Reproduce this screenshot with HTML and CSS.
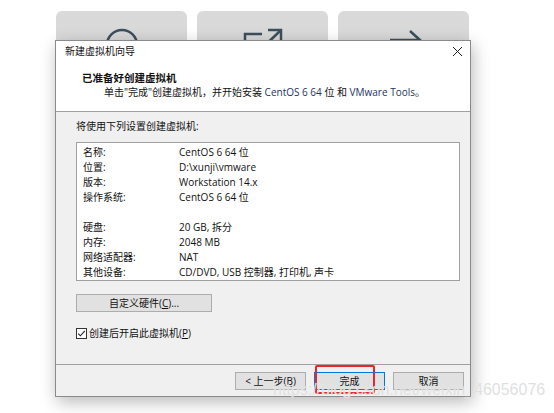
FILE: index.html
```html
<!DOCTYPE html>
<html lang="zh-CN">
<head>
    <meta charset="UTF-8">
    <title>新建虚拟机向导</title>
    <link rel="stylesheet" href="styles.css">
</head>
<body>

    <div class="tiles">
        <div class="tile">
            <svg class="tile-icon" width="40" height="40" viewBox="0 0 40 40"><circle cx="20" cy="17" r="15" fill="none" stroke="#3c4f5c" stroke-width="2.5"/></svg>
        </div>
        <div class="tile">
            <svg class="tile-icon" width="40" height="40" viewBox="0 0 40 40" fill="none" stroke="#3c4f5c" stroke-width="2.5"><path d="M19 6 H2 V38 H34 V22"/><path d="M12 27 L37 3"/><path d="M25 2 H38 V14"/></svg>
        </div>
        <div class="tile">
            <svg class="tile-icon" width="40" height="40" viewBox="0 0 40 40" fill="none" stroke="#3c4f5c" stroke-width="2.5"><path d="M6 12 H36"/><path d="M26 3 L36 12 L26 21"/></svg>
        </div>
    </div>

    <div class="dialog">
        <div class="titlebar">
            <span>新建虚拟机向导</span>
            <svg class="close" width="9" height="9" viewBox="0 0 9 9"><path d="M0 0 L9 9 M9 0 L0 9" stroke="#222" stroke-width="1"/></svg>
        </div>
        <div class="header">
            <div class="heading">已准备好创建虚拟机</div>
            <div class="sub">单击"完成"创建虚拟机，并开始安装 <span class="hl">CentOS 6 64</span> 位 和 <span class="hl">VMware Tools</span>。</div>
        </div>
        <div class="body">
            <div class="intro">将使用下列设置创建虚拟机:</div>
            <div class="listbox">
                <div class="row"><span class="key">名称:</span><span>CentOS 6 64 位</span></div>
                <div class="row"><span class="key">位置:</span><span>D:\xunji\vmware</span></div>
                <div class="row"><span class="key">版本:</span><span>Workstation 14.x</span></div>
                <div class="row"><span class="key">操作系统:</span><span>CentOS 6 64 位</span></div>
                <div class="row"></div>
                <div class="row"><span class="key">硬盘:</span><span>20 GB, 拆分</span></div>
                <div class="row"><span class="key">内存:</span><span>2048 MB</span></div>
                <div class="row"><span class="key">网络适配器:</span><span>NAT</span></div>
                <div class="row"><span class="key">其他设备:</span><span>CD/DVD, USB 控制器, 打印机, 声卡</span></div>
            </div>
            <div class="btn btn-custom">自定义硬件(<u>C</u>)...</div>
            <div class="check-row">
                <svg class="checkbox" width="11" height="11" viewBox="0 0 11 11"><rect x="0.5" y="0.5" width="10" height="10" fill="#fff" stroke="#333"/><path d="M2.2 5.6 L4.4 7.8 L8.8 2.8" fill="none" stroke="#222" stroke-width="1.1"/></svg>
                <span>创建后开启此虚拟机(<u>P</u>)</span>
            </div>
        </div>
        <div class="footer">
            <div class="btn">&lt; 上一步(<u>B</u>)</div>
            <div class="btn btn-default">完成</div>
            <div class="btn">取消</div>
        </div>
    </div>

    <div class="highlight"></div>
    <div class="watermark">https://blog.csdn.net/weixin_46056076</div>

</body>
</html>
```

FILE: styles.css
```css
body {
    margin: 0;
    width: 554px;
    height: 413px;
    background-color: #ffffff;
    font-family: "Open Sans", "Noto Sans CJK SC", sans-serif;
    font-size: 10px;
    color: #111;
    overflow: hidden;
    position: relative;
}
.tiles {
    display: flex;
    gap: 10px;
    padding: 11px 0 0 56px;
}
.tile {
    width: 131px;
    height: 120px;
    border-radius: 6px;
    background: linear-gradient(#dadada, #d4d4d4);
    display: flex;
    justify-content: center;
    align-items: flex-start;
}
.tile-icon {
    margin-top: 17px;
}
.dialog {
    position: absolute;
    left: 55px;
    top: 40px;
    width: 416px;
    height: 357px;
    box-sizing: border-box;
    border: 1px solid #8a8a8a;
    background-color: #f0f0f0;
    box-shadow: 2px 5px 16px rgba(0, 0, 0, 0.28);
    display: flex;
    flex-direction: column;
}
.titlebar {
    height: 21px;
    line-height: 21px;
    background-color: #fff;
    padding: 0 8px 0 9px;
    display: flex;
    justify-content: space-between;
    align-items: center;
}
.header {
    background-color: #fff;
    border-bottom: 1px solid #a0a0a0;
    box-sizing: border-box;
    height: 50px;
    padding-top: 9px;
}
.heading {
    font-weight: bold;
    font-size: 10.5px;
    line-height: 14px;
    padding-left: 26px;
}
.sub {
    line-height: 14px;
    padding-left: 48px;
}
.hl {
    color: #1d3466;
}
.body {
    flex: 1;
    padding: 7px 10px 0 20px;
    border-bottom: 1px solid #a0a0a0;
}
.intro {
    line-height: 14px;
}
.listbox {
    margin-top: 9px;
    height: 139px;
    box-sizing: border-box;
    border: 1px solid #a0a0a0;
    background-color: #fff;
    padding: 2px 6px 0;
}
.row {
    height: 15px;
    line-height: 15px;
    display: flex;
}
.key {
    width: 96px;
}
.btn {
    width: 71px;
    height: 18px;
    box-sizing: border-box;
    border: 1px solid #adadad;
    background-color: #e1e1e1;
    text-align: center;
    line-height: 16px;
}
.btn-custom {
    width: 136px;
    margin-top: 13px;
}
.btn-default {
    border-color: #0078d7;
}
.check-row {
    margin-top: 14px;
    height: 14px;
    line-height: 14px;
    display: flex;
    align-items: center;
    gap: 2px;
}
.footer {
    height: 31px;
    display: flex;
    justify-content: flex-end;
    gap: 8px;
    padding: 7px 6px 0 0;
    box-sizing: border-box;
}
.highlight {
    position: absolute;
    left: 315px;
    top: 365px;
    width: 60px;
    height: 29px;
    box-sizing: border-box;
    border: 2px solid #e8262b;
    border-radius: 2px;
}
.watermark {
    position: absolute;
    left: 273px;
    top: 381px;
    font-family: "Liberation Sans", Arial, sans-serif;
    font-size: 16px;
    color: rgba(215, 215, 215, 0.8);
    text-shadow: 0 0 1px rgba(255, 255, 255, 0.9);
}
```
